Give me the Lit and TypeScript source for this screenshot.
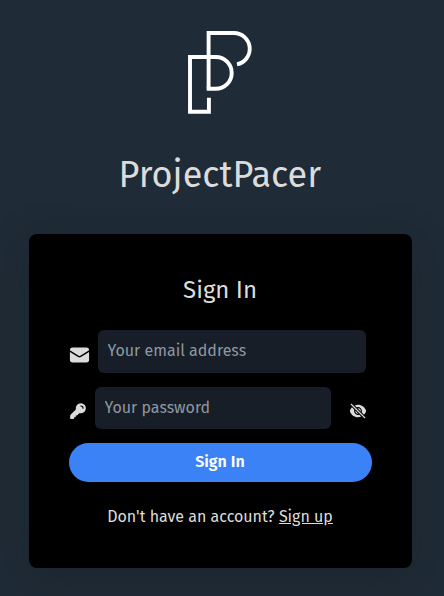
import { LitElement, html, css } from "lit";
import { customElement } from "lit/decorators.js";

@customElement("app-root")
export class AppRoot extends LitElement {
  static styles = css`
    :host {
      display: flex;
      flex-direction: column;
      align-items: center;
      box-sizing: border-box;
      height: 596px;
      overflow: hidden;
      padding: 28px 32px 28px 29px;
      background: #1f2b36;
      color: #dcdcdc;
      font-family: "Fira Sans", "Noto Sans", sans-serif;
      font-size: 16px;
      line-height: 24px;
    }
    * { box-sizing: border-box; }
    svg { display: block; flex: none; }
    .logo { width: 70px; height: 88px; margin-right: 2px; }
    h1, h2, p { margin: 0; padding-right: 1px; font-weight: 400; white-space: nowrap; }
    h1 { margin-top: 39px; padding-right: 1.4px; font-size: 36px; line-height: 40px; }
    .card {
      width: 383px;
      height: 334px;
      margin-top: 39px;
      padding: 40px 40px 0;
      border-radius: 8px;
      background: #000;
      box-shadow: 0 10px 40px rgba(20, 26, 38, 0.3);
      display: flex;
      flex-direction: column;
    }
    h2 { text-align: center; font-size: 24px; line-height: 32px; }
    .row { display: flex; flex: none; align-items: center; }
    .email { margin-top: 24px; height: 43px; }
    .password { margin-top: 14px; height: 42px; }
    .mail { width: 21px; height: 22px; margin: 7px 8px 0 0; }
    .key { width: 18px; height: 18px; margin: 6px 8px 0 0; }
    .eye { width: 18px; height: 18px; margin: 6px 0 0 18px; }
    input {
      width: 268px;
      height: 100%;
      padding: 0 9.6px 2px;
      border: 0;
      border-radius: 6px;
      background: #171e27;
      color: #dcdcdc;
      font: inherit;
    }
    .password input { width: 236px; }
    input::placeholder { color: #9097a3; opacity: 1; }
    button {
      flex: none;
      height: 39px;
      margin-top: 14px;
      padding: 0 1px 2px 0;
      border: 0;
      border-radius: 20px;
      background: #3b82f6;
      color: #fff;
      font: inherit;
      font-weight: 600;
    }
    p { margin-top: 23px; text-align: center; }
    a { color: inherit; text-decoration: underline; }
  `;

  render() {
    return html`
      <svg class="logo" viewBox="185 28 70 88" fill="none" stroke="#fff" stroke-width="3.9">
        <path d="M208.6 88.8V33H233.9A15.8 15.8 0 0 1 237 64.3" />
        <path d="M208.9 97.7V111.8H190V57H215.8A15.9 15.9 0 0 1 215.8 88.8H206.7" />
      </svg>
      <h1>ProjectPacer</h1>
      <div class="card">
        <h2>Sign In</h2>
        <div class="row email">
          <svg class="mail" viewBox="0.5 1 23 22" fill="currentColor">
            <path d="M1.5 8.67v8.58a3 3 0 003 3h15a3 3 0 003-3V8.67l-8.928 5.493a3 3 0 01-3.144 0L1.5 8.67z" />
            <path d="M22.5 6.908V6.75a3 3 0 00-3-3h-15a3 3 0 00-3 3v.158l9.714 5.978a1.5 1.5 0 001.572 0L22.5 6.908z" />
          </svg>
          <input type="email" placeholder="Your email address" />
        </div>
        <div class="row password">
          <svg class="key" viewBox="0 0 24 24" fill="currentColor">
            <path fill-rule="evenodd" d="M15.75 1.5a6.75 6.75 0 00-6.651 7.906c.067.39-.032.717-.221.906l-6.5 6.499a3 3 0 00-.878 2.121v2.818c0 .414.336.75.75.75H6a.75.75 0 00.75-.75v-1.5h1.5A.75.75 0 009 19.5V18h1.5a.75.75 0 00.53-.22l2.658-2.658c.19-.189.517-.288.906-.22A6.75 6.75 0 1015.75 1.5zm0 3a.75.75 0 000 1.5A2.25 2.25 0 0118 8.25a.75.75 0 001.5 0 3.75 3.75 0 00-3.75-3.75z" />
          </svg>
          <input type="password" placeholder="Your password" />
          <svg class="eye" viewBox="0 0 24 24" fill="currentColor">
            <path d="M3.53 2.47a.75.75 0 00-1.06 1.06l18 18a.75.75 0 101.06-1.06l-18-18zM22.676 12.553a11.249 11.249 0 01-2.631 4.31l-3.099-3.099a5.25 5.25 0 00-6.71-6.71L7.759 4.577a11.217 11.217 0 014.242-.827c4.97 0 9.185 3.223 10.675 7.69.12.362.12.752 0 1.113z" />
            <path d="M15.75 12c0 .18-.013.357-.037.53l-4.244-4.243A3.75 3.75 0 0115.75 12zM12.53 15.713l-4.243-4.244a3.75 3.75 0 004.243 4.243z" />
            <path d="M6.75 12c0-.619.107-1.213.304-1.764l-3.1-3.1a11.25 11.25 0 00-2.63 4.31c-.12.362-.12.752 0 1.114 1.489 4.467 5.704 7.69 10.675 7.69 1.5 0 2.933-.294 4.242-.827l-2.477-2.477A5.25 5.25 0 016.75 12z" />
          </svg>
        </div>
        <button type="button">Sign In</button>
        <p>Don't have an account? <a>Sign up</a></p>
      </div>
    `;
  }
}
